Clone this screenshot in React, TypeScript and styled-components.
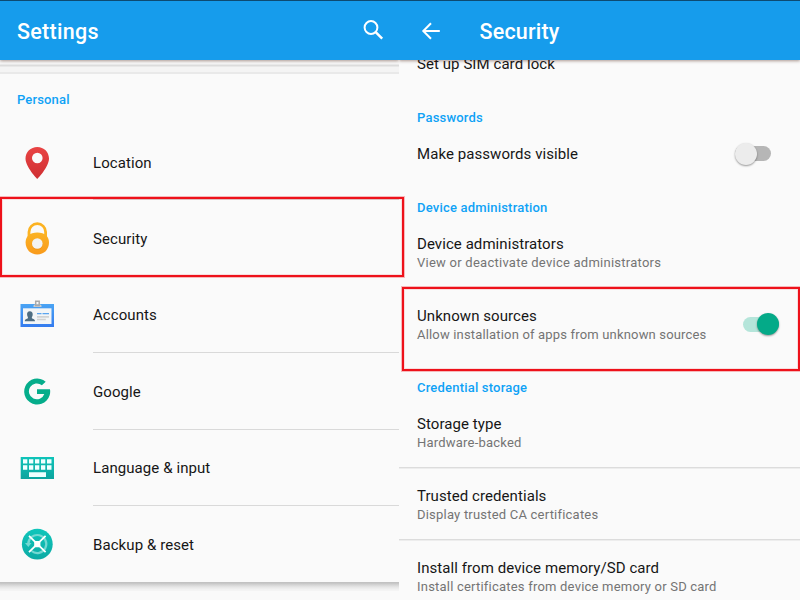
import React from "react";
import styled, { createGlobalStyle, css } from "styled-components";

const Global = createGlobalStyle`
  * { box-sizing: border-box; }
  body { margin: 0; background: #fafafa; font-family: Roboto, sans-serif; overflow: hidden; }
`;

const Screen = styled.main`
  position: relative;
  display: flex;
  width: 800px;
  height: 600px;
  overflow: hidden;
  background: #fafafa;
`;

const Panel = styled.section<{ $width: number }>`
  display: flex;
  flex-direction: column;
  width: ${(p) => p.$width}px;
  height: 600px;
  overflow: hidden;
`;

const AppBar = styled.header<{ $gap?: number; $left: number }>`
  position: relative;
  z-index: 1;
  flex: none;
  display: flex;
  align-items: center;
  gap: ${(p) => p.$gap ?? 0}px;
  height: 60px;
  padding: 2px 13px 0 ${(p) => p.$left}px;
  border-top: 1px solid #0d4a71;
  background: #169cec;
  color: #fff;
  box-shadow: 0 1px 3px rgba(70, 30, 15, 0.45);
  svg { margin-bottom: 2px; }
`;

const BarTitle = styled.h1<{ $spacing: number }>`
  flex: 1;
  margin: 0;
  font-size: 21.5px;
  font-weight: 500;
  line-height: 28px;
  letter-spacing: ${(p) => p.$spacing}px;
  white-space: nowrap;
`;

const CardGap = styled.div`
  flex: none;
  height: 14px;
  border-bottom: 2px solid #e9e9e9;
  background: linear-gradient(#f8f8f8 0 4px, #dcdcdc 5px 6px, #f4f4f4 7px);
`;

const Category = styled.h2<{ $pad: string; $height: number; $spacing: number }>`
  flex: none;
  height: ${(p) => p.$height}px;
  margin: 0;
  padding: ${(p) => p.$pad};
  color: #0fa2f6;
  font-size: 13px;
  font-weight: 500;
  line-height: 18px;
  letter-spacing: ${(p) => p.$spacing}px;
  white-space: nowrap;
`;

const Menu = styled.nav`
  flex: none;
  display: flex;
  flex-direction: column;
`;

const MenuRow = styled.div`
  display: grid;
  grid-template-columns: 93px 1fr;
  height: 76.4px;
`;

const IconCell = styled.div`
  padding: 18px 0 0 17px;
  svg { display: block; }
`;

const MenuLabel = styled.div<{ $last?: boolean; $spacing: number }>`
  display: flex;
  align-items: center;
  padding-top: 2px;
  color: #161616;
  font-size: 15px;
  letter-spacing: ${(p) => p.$spacing}px;
  border-bottom: ${(p) => (p.$last ? "0" : "1px solid #d9d9d9")};
`;

const CardFoot = styled.div`
  flex: none;
  height: 9px;
  background: linear-gradient(#c2c2c2 0 1px, #cdcdcd 2px, #e6e6e6 5px, #f4f4f4 8px);
`;

const Preferences = styled.div`
  display: flex;
  flex-direction: column;
  height: 540px;
  margin-top: -24px;
`;

const Preference = styled.div<{ $compact?: boolean; $divider?: boolean }>`
  flex: none;
  display: flex;
  justify-content: space-between;
  align-items: center;
  height: ${(p) => (p.$compact ? 54 : 72)}px;
  padding: 2px 20px 0 18px;
  ${(p) => p.$divider && css`box-shadow: inset 0 -1px #dcdcdc, 0 1px #ededed;`}
`;

const PrefTitle = styled.div<{ $spacing: number }>`
  color: #161616;
  font-size: 15px;
  line-height: 19px;
  letter-spacing: ${(p) => p.$spacing}px;
  white-space: nowrap;
`;

const PrefSummary = styled.div<{ $spacing: number }>`
  color: #747474;
  font-size: 13px;
  line-height: 18px;
  letter-spacing: ${(p) => p.$spacing}px;
  white-space: nowrap;
`;

const Track = styled.div<{ $on?: boolean }>`
  display: flex;
  align-items: center;
  justify-content: ${(p) => (p.$on ? "flex-end" : "flex-start")};
  width: 36px;
  height: 15px;
  margin: ${(p) => (p.$on ? "-2px 1px 0 0" : "-1px 9px 0 0")};
  border-radius: 8px;
  background: ${(p) => (p.$on ? "#b5e5da" : "#b6b6b6")};
`;

const Thumb = styled.div<{ $on?: boolean }>`
  flex: none;
  width: 22px;
  height: 22px;
  border-radius: 50%;
  background: ${(p) => (p.$on ? "#04aa88" : "#ececec")};
  box-shadow: 0 1px 2px rgba(0, 0, 0, 0.4);
`;

const Highlight = styled.div<{ $box: [number, number, number, number] }>`
  position: absolute;
  z-index: 2;
  left: ${(p) => p.$box[0]}px;
  top: ${(p) => p.$box[1]}px;
  width: ${(p) => p.$box[2]}px;
  height: ${(p) => p.$box[3]}px;
  border: 2px solid #ee111a;
  box-shadow: inset 0 0 0 1px rgba(238, 17, 26, 0.12), 0 0 0 1px rgba(238, 17, 26, 0.28);
`;

const PinIcon = () => (
  <svg width="40" height="40" viewBox="0 0 40 40">
    <defs><linearGradient id="pin" x2="0" y2="1"><stop stopColor="#e94444" /><stop offset="1" stopColor="#cf2f32" /></linearGradient></defs>
    <path fill="url(#pin)" fillRule="evenodd" d="M20.3 5C13.7 5 8.5 10 8.5 16.5c0 8.5 11.8 20.5 11.8 20.5S32 25 32 16.5C32 10 26.900 5 20.300 5zm0 5.700a5.300 5.300 0 1 1 0 10.600 5.300 5.300 0 0 1 0-10.600z" />
  </svg>
);

const LockIcon = () => (
  <svg width="40" height="40" viewBox="0 0 40 40">
    <defs><linearGradient id="lock" x2="0" y2="1"><stop stopColor="#fbb324" /><stop offset="1" stopColor="#f99a1b" /></linearGradient></defs>
    <path fill="none" stroke="#fcb322" strokeWidth="2.800" d="M12 20.500v-6.500a8.300 8.300 0 0 1 16.600 0v6.500" />
    <path fill="url(#lock)" d="M10.800 18c2.500-2.700 6-3.500 9.500-3.500s7 .8 9.500 3.500c1.500 2 2.200 4 2.200 6.500 0 7-5 12-11.700 12S8.600 31.500 8.600 24.500c0-2.500.7-4.500 2.200-6.500z" />
    <circle cx="20.300" cy="26.300" r="5.500" fill="#e58d16" opacity=".5" />
    <circle cx="20.300" cy="25.500" r="5.300" fill="#f3f3f3" />
  </svg>
);

const BadgeIcon = () => (
  <svg width="40" height="40" viewBox="0 0 40 40">
    <defs><linearGradient id="badge" x2="0" y2="1"><stop stopColor="#4aa4f4" /><stop offset="1" stopColor="#347bef" /></linearGradient></defs>
    <path fill="url(#badge)" d="M3.500 9H37v23H3.500z" />
    <path fill="#f2f5f7" d="M6 13.300h28.500V29H6z" />
    <path fill="#c9cdd0" d="M16.500 10.500l1.500-1.300h5l1.500 1.300v1.500h-8z" />
    <path fill="none" stroke="#a9a9a9" strokeWidth="1.500" d="M18.700 6.200h3.500v4.300h-3.500z" />
    <path fill="#4e6d82" d="M12.800 16.300c2 0 3.100 1.500 2.900 3.500-.1 1.500-.9 2.200-.9 3 0 1.200 3.200.8 3.200 3.400H7.800c0-2.600 3.200-2.200 3.200-3.400 0-.8-.8-1.500-.9-3-.2-2 .8-3.500 2.700-3.500z" />
    <path stroke="#5aa5ef" strokeWidth="1.200" d="M20 18.600h4.500M25.500 18.600H32" />
    <path stroke="#d0d2d3" strokeWidth="1.700" d="M20 21.800h12M20 24.500h8.800" />
  </svg>
);

const GoogleIcon = () => (
  <svg width="40" height="40" viewBox="0 0 40 40">
    <path fill="#05ad8b" d="M28.700 10.700A13 13 0 1 0 33 18.300H20v4.600h7.300a7.900 7.900 0 1 1-2.400-8.600z" />
  </svg>
);

const KeyboardIcon = () => (
  <svg width="40" height="40" viewBox="0 0 40 40">
    <defs><linearGradient id="keys" x2="0" y2="1"><stop stopColor="#0ec4b9" /><stop offset="1" stopColor="#0da49e" /></linearGradient></defs>
    <path fill="url(#keys)" d="M3.700 9H37v22H3.700z" />
    <path fill="#efffff" d="M6 11.200h4.300v4.300H6zm6 0h4.300v4.300H12zm6 0h4.300v4.300H18zm6 0h4.300v4.300H24zm6 0h4.500v4.300H30zM6 17.300h4.300v4.500H6zm6 0h4.300v4.500H12zm6 0h4.300v4.500H18zm6 0h4.300v4.500H24zm6 0h4.500v4.500H30zM12 24.300h17V29H12z" />
  </svg>
);

const BackupIcon = () => (
  <svg width="40" height="40" viewBox="0 0 40 40">
    <defs><linearGradient id="backup" x2="0" y2="1"><stop stopColor="#10c6bb" /><stop offset="1" stopColor="#0caaa4" /></linearGradient></defs>
    <circle cx="20.300" cy="20.200" r="15.400" fill="url(#backup)" />
    <path fill="none" stroke="#73d8d2" strokeWidth="2.200" d="M11.300 20a9 9 0 1 1 3.300 7" />
    <path fill="#73d8d2" d="M8 19h6.500l-3.200 4z" />
    <path stroke="#fff" strokeWidth="1.800" d="M12 11.800L28.600 28.200M28.600 11.800L12 28.200" />
    <rect x="17.200" y="17" width="6.200" height="6.200" rx="1" fill="#fff" />
  </svg>
);

const SearchIcon = () => (
  <svg width="24" height="24" viewBox="0 0 24 24">
    <circle cx="9" cy="8.500" r="6.400" fill="none" stroke="#fff" strokeWidth="2" />
    <path d="M13.700 13.200l6.500 6.500" stroke="#fff" strokeWidth="2.500" />
  </svg>
);

const BackIcon = () => (
  <svg width="24" height="24" viewBox="0 0 24 24">
    <path d="M20.800 12H4.500M12 4.300L4.300 12l7.700 7.700" fill="none" stroke="#fff" strokeWidth="2" />
  </svg>
);

const menu = [
  { label: "Location", Icon: PinIcon },
  { label: "Security", Icon: LockIcon },
  { label: "Accounts", Icon: BadgeIcon },
  { label: "Google", Icon: GoogleIcon },
  { label: "Language & input", Icon: KeyboardIcon },
  { label: "Backup & reset", Icon: BackupIcon },
];

interface PrefProps {
  title: string;
  summary?: string;
  summarySpacing?: number;
  divider?: boolean;
  children?: React.ReactNode;
}

const Pref = ({ title, summary, summarySpacing = 0.21, divider, children }: PrefProps) => (
  <Preference $compact={!summary} $divider={divider}>
    <div>
      <PrefTitle $spacing={0.07}>{title}</PrefTitle>
      {summary && <PrefSummary $spacing={summarySpacing}>{summary}</PrefSummary>}
    </div>
    {children}
  </Preference>
);

const Section = ({ children }: { children: string }) => (
  <Category $height={36} $pad="19px 0 0 18px" $spacing={0.2}>{children}</Category>
);

export default function App() {
  return (
    <>
      <Global />
      <Screen>
        <Panel $width={399}>
          <AppBar $left={17}>
            <BarTitle $spacing={0.27}>Settings</BarTitle>
            <SearchIcon />
          </AppBar>
          <CardGap />
          <Category $height={50} $pad="17px 0 0 17px" $spacing={0.15}>Personal</Category>
          <Menu>
            {menu.map(({ label, Icon }, i) => (
              <MenuRow key={label}>
                <IconCell><Icon /></IconCell>
                <MenuLabel $spacing={0.08} $last={i === menu.length - 1}>{label}</MenuLabel>
              </MenuRow>
            ))}
          </Menu>
          <CardFoot />
        </Panel>
        <Panel $width={401}>
          <AppBar $left={20} $gap={36.5}>
            <BackIcon />
            <BarTitle $spacing={0.2}>Security</BarTitle>
          </AppBar>
          <Preferences>
            <Pref title="Set up SIM card lock" />
            <Section>Passwords</Section>
            <Pref title="Make passwords visible"><Track><Thumb /></Track></Pref>
            <Section>Device administration</Section>
            <Pref title="Device administrators" summary="View or deactivate device administrators" summarySpacing={0.25} />
            <Pref title="Unknown sources" summary="Allow installation of apps from unknown sources" summarySpacing={0.17}>
              <Track $on><Thumb $on /></Track>
            </Pref>
            <Section>Credential storage</Section>
            <Pref title="Storage type" summary="Hardware-backed" divider />
            <Pref title="Trusted credentials" summary="Display trusted CA certificates" divider />
            <Pref title="Install from device memory/SD card" summary="Install certificates from device memory or SD card" />
          </Preferences>
        </Panel>
        <Highlight $box={[0, 197, 404, 80]} />
        <Highlight $box={[402, 287, 398, 84]} />
      </Screen>
    </>
  );
}
